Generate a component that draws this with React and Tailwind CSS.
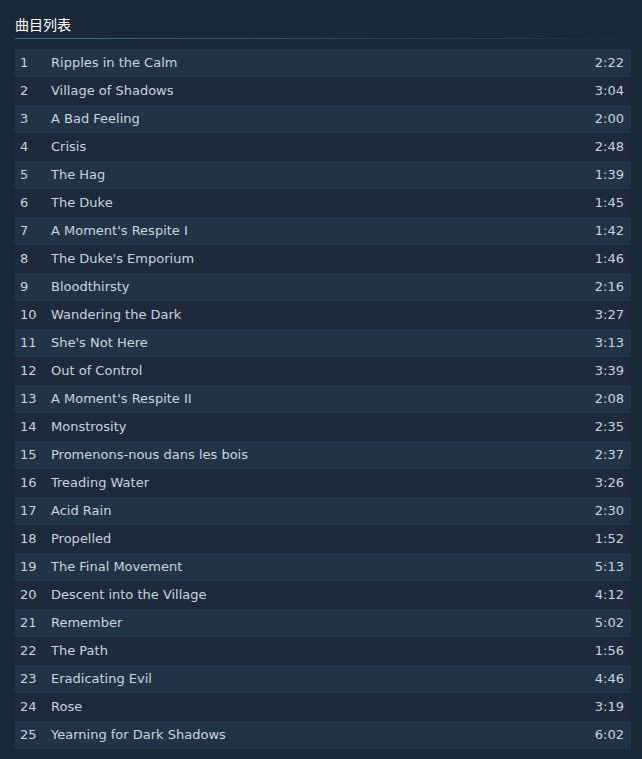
const tracks = [
  ["Ripples in the Calm", "2:22"],
  ["Village of Shadows", "3:04"],
  ["A Bad Feeling", "2:00"],
  ["Crisis", "2:48"],
  ["The Hag", "1:39"],
  ["The Duke", "1:45"],
  ["A Moment's Respite I", "1:42"],
  ["The Duke's Emporium", "1:46"],
  ["Bloodthirsty", "2:16"],
  ["Wandering the Dark", "3:27"],
  ["She's Not Here", "3:13"],
  ["Out of Control", "3:39"],
  ["A Moment's Respite II", "2:08"],
  ["Monstrosity", "2:35"],
  ["Promenons-nous dans les bois", "2:37"],
  ["Treading Water", "3:26"],
  ["Acid Rain", "2:30"],
  ["Propelled", "1:52"],
  ["The Final Movement", "5:13"],
  ["Descent into the Village", "4:12"],
  ["Remember", "5:02"],
  ["The Path", "1:56"],
  ["Eradicating Evil", "4:46"],
  ["Rose", "3:19"],
  ["Yearning for Dark Shadows", "6:02"],
];

export default function App() {
  return (
    <div
      className="min-h-[759px] w-full bg-[#1b2838] pl-[15px] pr-[11px] pt-[13px] text-[14px] text-[#c6d4df]"
      style={{ fontFamily: '"DejaVu Sans", "Noto Sans CJK SC", sans-serif' }}
    >
      <div
        className="text-[14px] leading-[22px] text-white"
        style={{ fontFamily: '"Noto Sans CJK SC", sans-serif' }}
      >
        曲目列表
      </div>
      <div className="mt-[3px] h-px w-full bg-gradient-to-r from-[#3d6c8d] via-[#2e4d66] to-transparent" />
      <div className="mt-[10px] flex flex-col">
        {tracks.map(([title, time], i) => (
          <div
            key={i}
            className={
              "flex h-[28px] items-center pl-[5px] pr-[7px] text-[13px] " +
              (i % 2 === 0 ? "bg-[#213447]" : "bg-[#1e2a3b]")
            }
          >
            <span className="w-[31px] shrink-0">{i + 1}</span>
            <span className="flex-1">{title}</span>
            <span>{time}</span>
          </div>
        ))}
      </div>
    </div>
  );
}
